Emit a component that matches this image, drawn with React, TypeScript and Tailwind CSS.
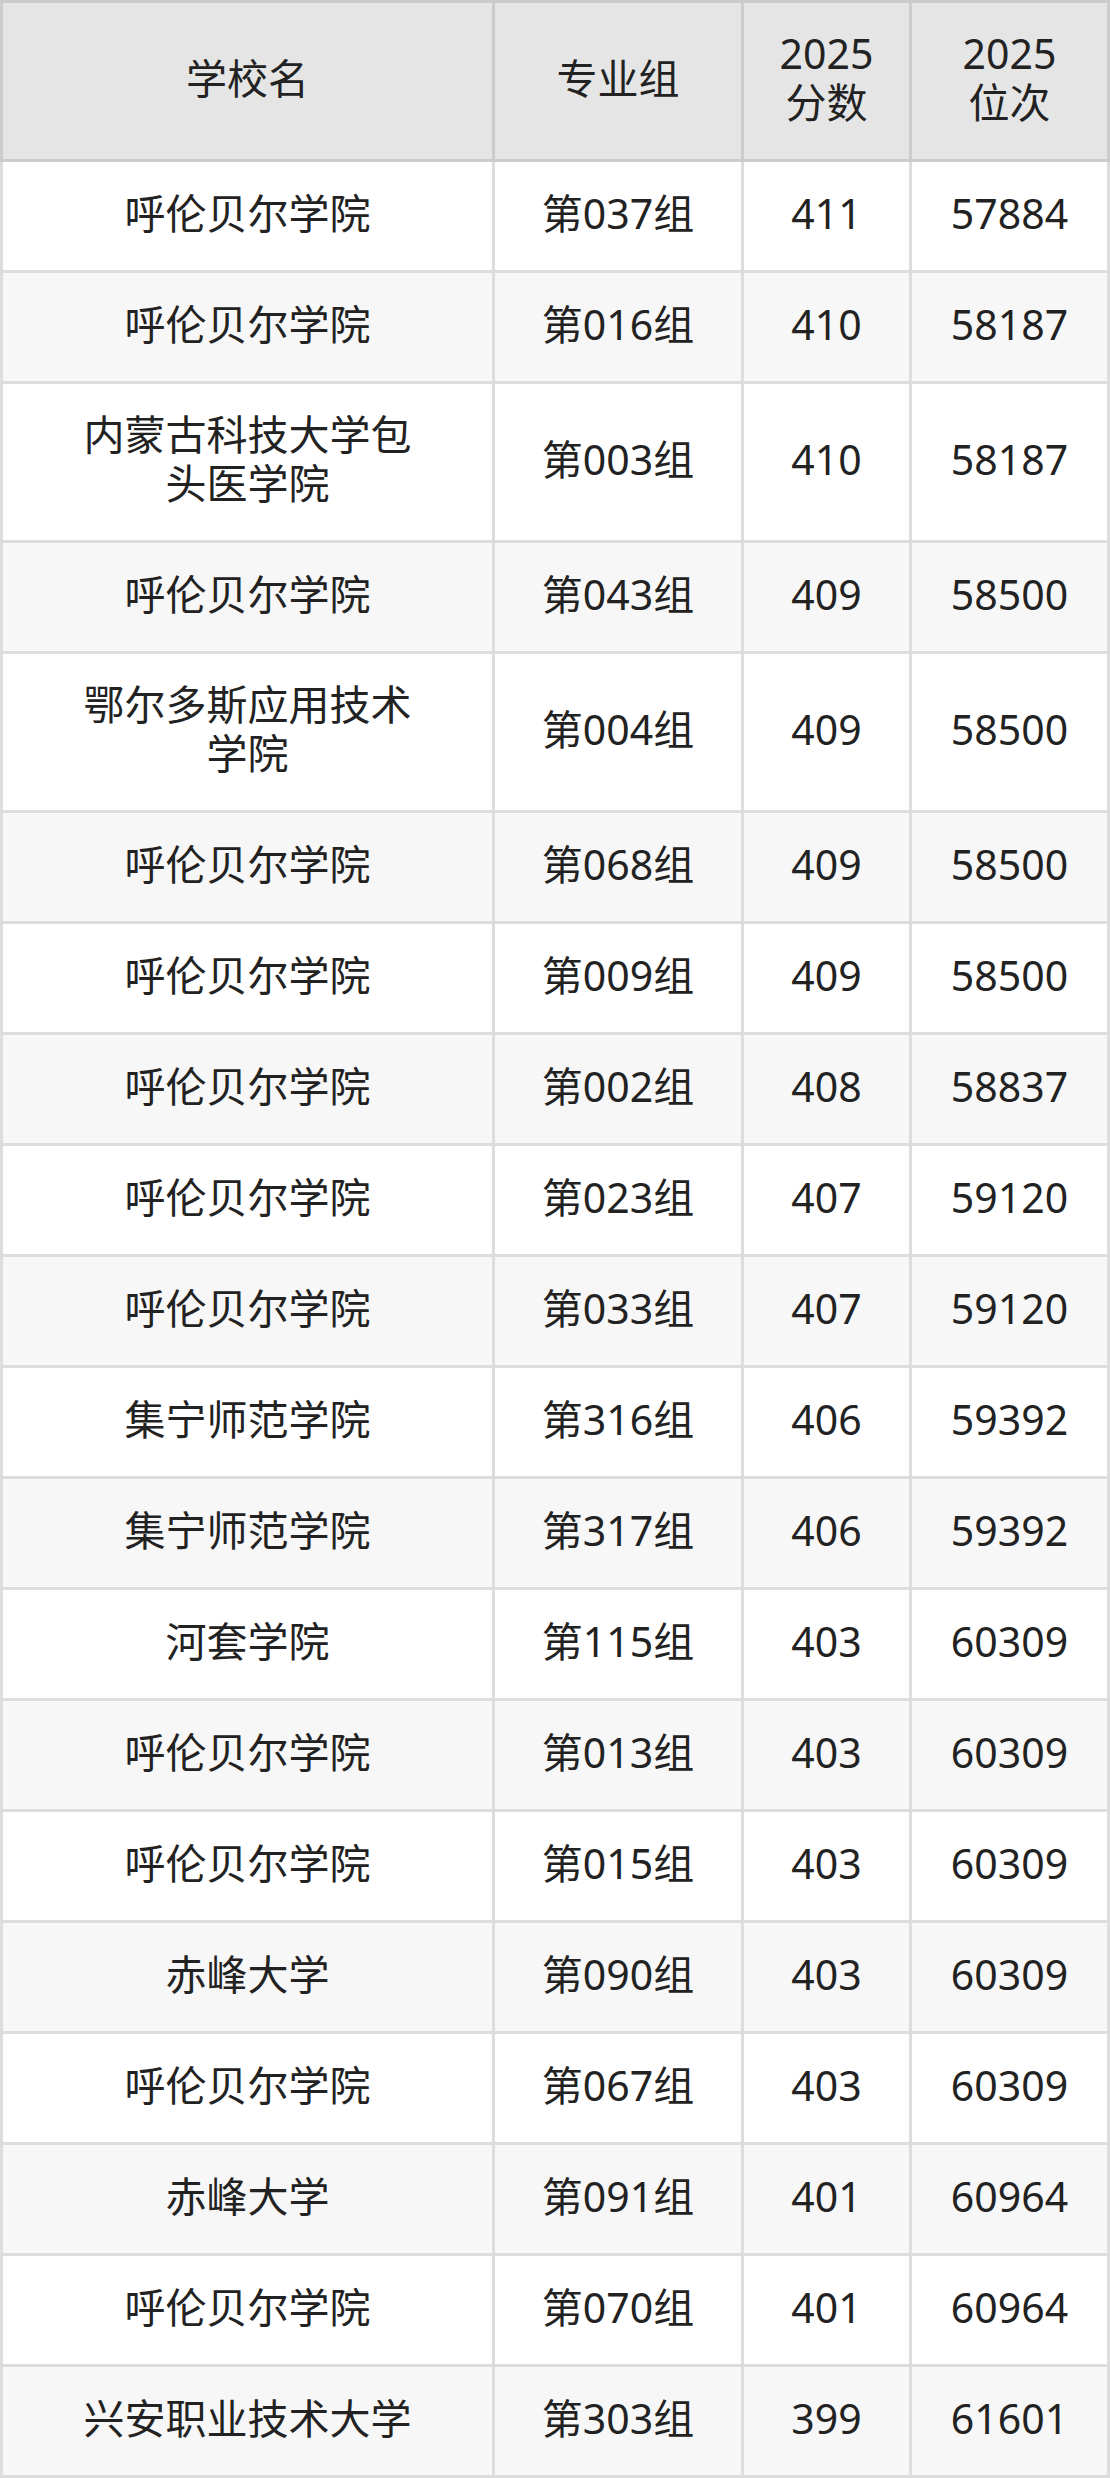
import React from 'react';

type Row = { school: string; group: string; score: number; rank: number; tall?: boolean };

const rows: Row[] = [
  { school: '呼伦贝尔学院', group: '第037组', score: 411, rank: 57884 },
  { school: '呼伦贝尔学院', group: '第016组', score: 410, rank: 58187 },
  { school: '内蒙古科技大学包头医学院', group: '第003组', score: 410, rank: 58187, tall: true },
  { school: '呼伦贝尔学院', group: '第043组', score: 409, rank: 58500 },
  { school: '鄂尔多斯应用技术学院', group: '第004组', score: 409, rank: 58500, tall: true },
  { school: '呼伦贝尔学院', group: '第068组', score: 409, rank: 58500 },
  { school: '呼伦贝尔学院', group: '第009组', score: 409, rank: 58500 },
  { school: '呼伦贝尔学院', group: '第002组', score: 408, rank: 58837 },
  { school: '呼伦贝尔学院', group: '第023组', score: 407, rank: 59120 },
  { school: '呼伦贝尔学院', group: '第033组', score: 407, rank: 59120 },
  { school: '集宁师范学院', group: '第316组', score: 406, rank: 59392 },
  { school: '集宁师范学院', group: '第317组', score: 406, rank: 59392 },
  { school: '河套学院', group: '第115组', score: 403, rank: 60309 },
  { school: '呼伦贝尔学院', group: '第013组', score: 403, rank: 60309 },
  { school: '呼伦贝尔学院', group: '第015组', score: 403, rank: 60309 },
  { school: '赤峰大学', group: '第090组', score: 403, rank: 60309 },
  { school: '呼伦贝尔学院', group: '第067组', score: 403, rank: 60309 },
  { school: '赤峰大学', group: '第091组', score: 401, rank: 60964 },
  { school: '呼伦贝尔学院', group: '第070组', score: 401, rank: 60964 },
  { school: '兴安职业技术大学', group: '第303组', score: 399, rank: 61601 },
];

export default function App() {
  return (
    <div
      className="w-[1110px] bg-white text-[#222222]"
      style={{ fontFamily: '"Noto Sans", "Noto Sans CJK SC", sans-serif' }}
    >
      <table className="w-[1110px] table-fixed border-collapse text-center text-[41px] leading-[49px]">
        <colgroup>
          <col className="w-[492px]" />
          <col className="w-[249px]" />
          <col className="w-[168px]" />
          <col className="w-[198px]" />
        </colgroup>
        <thead>
          <tr className="bg-[#e5e5e5]">
            <th className="h-[159px] border-[3px] border-[#cccccc] pb-[6px] font-normal">学校名</th>
            <th className="border-[3px] border-[#cccccc] pb-[6px] font-normal">专业组</th>
            <th className="border-[3px] border-[#cccccc] pb-[6px] font-normal">
              2025
              <br />
              分数
            </th>
            <th className="border-[3px] border-[#cccccc] pb-[6px] font-normal">
              2025
              <br />
              位次
            </th>
          </tr>
        </thead>
        <tbody>
          {rows.map((r, i) => (
            <tr key={i} className={i % 2 === 0 ? 'bg-white' : 'bg-[#f7f7f7]'}>
              <td
                className={`${r.tall ? 'h-[159px]' : 'h-[111px]'} border-[3px] border-[#dddddd] px-[72px] pb-[6px]`}
              >
                {r.school}
              </td>
              <td className="border-[3px] border-[#dddddd] pb-[6px]">{r.group}</td>
              <td className="border-[3px] border-[#dddddd] pb-[6px]">{r.score}</td>
              <td className="border-[3px] border-[#dddddd] pb-[6px]">{r.rank}</td>
            </tr>
          ))}
        </tbody>
      </table>
    </div>
  );
}
